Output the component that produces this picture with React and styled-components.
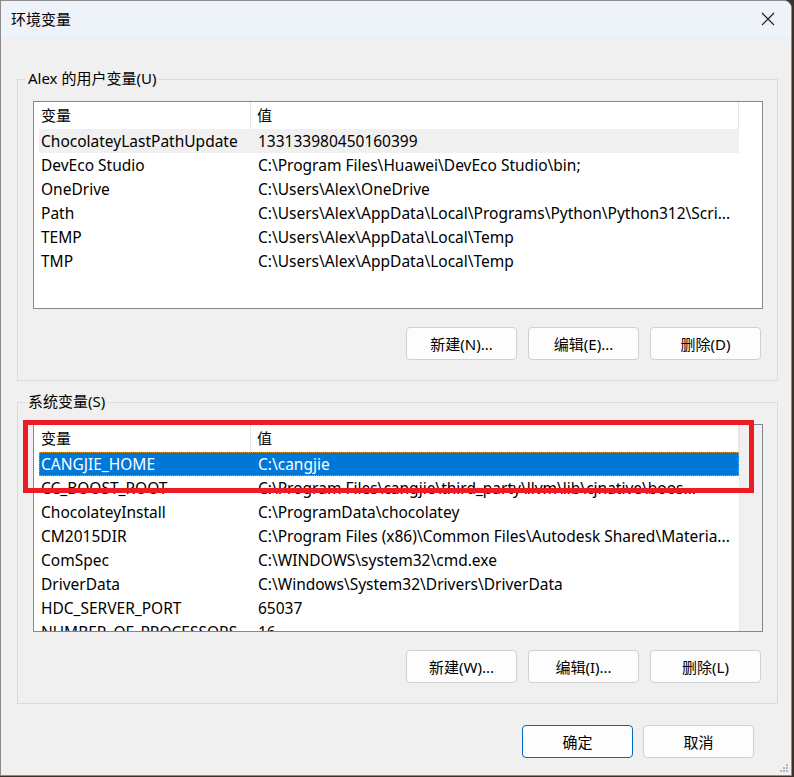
import React from "react";
import styled, { createGlobalStyle } from "styled-components";

const GlobalStyle = createGlobalStyle`
  html, body {
    margin: 0;
    padding: 0;
    background: #3d3129;
  }
  * {
    box-sizing: border-box;
  }
`;

const Window = styled.div`
  position: relative;
  width: 792px;
  height: 776px;
  background: #f0f0f0;
  border: 1px solid #8c8c8c;
  border-top-right-radius: 8px;
  overflow: hidden;
  display: flex;
  flex-direction: column;
  font-family: "Noto Sans", "Noto Sans CJK SC", sans-serif;
  font-size: 15px;
  color: #000;
`;

const TitleBar = styled.div`
  height: 36px;
  flex: none;
  background: #eef2f9;
  display: flex;
  align-items: center;
  justify-content: space-between;
  padding-left: 10px;
`;

const Title = styled.span`
  font-size: 15px;
  line-height: 1;
`;

const CloseButton = styled.button`
  width: 46px;
  height: 36px;
  border: none;
  background: transparent;
  display: flex;
  align-items: center;
  justify-content: center;
  padding: 0;
`;

const Content = styled.div`
  flex: 1;
  display: flex;
  flex-direction: column;
  padding: 42px 14px 0 16px;
`;

const GroupBox = styled.div`
  position: relative;
  width: 761px;
  height: 302px;
  border: 1px solid #dcdcdc;
  padding: 21px 15px 0 15px;
  display: flex;
  flex-direction: column;
  gap: 18px;
  margin-top: ${(p) => (p.$first ? "0" : "21px")};
`;

const Legend = styled.span`
  position: absolute;
  top: -13px;
  left: 8px;
  padding: 0 2px;
  background: #f0f0f0;
  font-size: 15px;
  line-height: 22px;
`;

const ListBox = styled.div`
  width: 730px;
  height: 208px;
  border: 1px solid #828790;
  background: #fff;
  display: flex;
  overflow: hidden;
`;

const Table = styled.div`
  width: 705px;
  flex: none;
  display: flex;
  flex-direction: column;
  overflow: hidden;
`;

const ScrollTrack = styled.div`
  flex: 1;
  background: ${(p) => (p.$visible ? "#f0f0f0" : "#fff")};
  border-left: 1px solid ${(p) => (p.$visible ? "#e8e8e8" : "#fff")};
`;

const Header = styled.div`
  height: 27px;
  flex: none;
  display: grid;
  grid-template-columns: 217px 1fr;
  border-right: 1px solid #e5e5e5;
`;

const HeaderCell = styled.div`
  padding-left: ${(p) => (p.$first ? "7px" : "6px")};
  line-height: 27px;
  border-right: ${(p) => (p.$first ? "1px solid #e5e5e5" : "none")};
`;

const Row = styled.div`
  flex: none;
  height: 24px;
  margin-left: 5px;
  width: 700px;
  display: grid;
  grid-template-columns: 217px 1fr;
  font-size: 15.5px;
  line-height: 24px;
  white-space: nowrap;
  background: ${(p) =>
    p.$selected ? "#0078d7" : p.$soft ? "#f0f0f0" : "transparent"};
  color: ${(p) => (p.$selected ? "#fff" : "#000")};
  outline: ${(p) => (p.$selected ? "1px dotted #e39a2d" : "none")};
  outline-offset: -1px;
`;

const Cell = styled.div`
  padding-left: 2px;
  overflow: hidden;
`;

const ButtonRow = styled.div`
  display: flex;
  justify-content: flex-end;
  gap: 11px;
  padding-right: 1px;
`;

const Button = styled.button`
  width: 111px;
  height: 33px;
  border-radius: 4px;
  border: 1px solid ${(p) => (p.$primary ? "#0067c0" : "#d0d0d0")};
  background: #fdfdfd;
  font-family: "Noto Sans", "Noto Sans CJK SC", sans-serif;
  font-size: 15px;
  color: #000;
  padding: 0;
`;

const Footer = styled.div`
  display: flex;
  justify-content: flex-end;
  gap: 10px;
  margin-top: 21px;
  padding-right: 23px;
`;

const Highlight = styled.div`
  position: absolute;
  left: 22px;
  top: 419px;
  width: 731px;
  height: 73px;
  border: 5px solid #ed1c24;
  pointer-events: none;
`;

const Grip = styled.svg`
  position: absolute;
  right: 3px;
  bottom: 3px;
`;

const userVars = [
  ["ChocolateyLastPathUpdate", "133133980450160399"],
  ["DevEco Studio", "C:\\Program Files\\Huawei\\DevEco Studio\\bin;"],
  ["OneDrive", "C:\\Users\\Alex\\OneDrive"],
  ["Path", "C:\\Users\\Alex\\AppData\\Local\\Programs\\Python\\Python312\\Scri..."],
  ["TEMP", "C:\\Users\\Alex\\AppData\\Local\\Temp"],
  ["TMP", "C:\\Users\\Alex\\AppData\\Local\\Temp"],
];

const sysVars = [
  ["CANGJIE_HOME", "C:\\cangjie"],
  ["CC_BOOST_ROOT", "C:\\Program Files\\cangjie\\third_party\\llvm\\lib\\cjnative\\boos..."],
  ["ChocolateyInstall", "C:\\ProgramData\\chocolatey"],
  ["CM2015DIR", "C:\\Program Files (x86)\\Common Files\\Autodesk Shared\\Materia..."],
  ["ComSpec", "C:\\WINDOWS\\system32\\cmd.exe"],
  ["DriverData", "C:\\Windows\\System32\\Drivers\\DriverData"],
  ["HDC_SERVER_PORT", "65037"],
  ["NUMBER_OF_PROCESSORS", "16"],
];

const VarList = ({ rows, selected, soft, scroll }) => (
  <ListBox>
    <Table>
      <Header>
        <HeaderCell $first>变量</HeaderCell>
        <HeaderCell>值</HeaderCell>
      </Header>
      {rows.map(([name, value], i) => (
        <Row key={name} $selected={i === selected} $soft={i === soft}>
          <Cell>{name}</Cell>
          <Cell>{value}</Cell>
        </Row>
      ))}
    </Table>
    <ScrollTrack $visible={scroll} />
  </ListBox>
);

const App = () => {
  return (
    <>
      <GlobalStyle />
      <Window>
        <TitleBar>
          <Title>环境变量</Title>
          <CloseButton aria-label="关闭">
            <svg width="14" height="14" viewBox="0 0 14 14">
              <path d="M1 1 L13 13 M13 1 L1 13" stroke="#1a1a1a" strokeWidth="1.1" />
            </svg>
          </CloseButton>
        </TitleBar>
        <Content>
          <GroupBox $first>
            <Legend>Alex 的用户变量(U)</Legend>
            <VarList rows={userVars} soft={0} />
            <ButtonRow>
              <Button>新建(N)...</Button>
              <Button>编辑(E)...</Button>
              <Button>删除(D)</Button>
            </ButtonRow>
          </GroupBox>
          <GroupBox>
            <Legend>系统变量(S)</Legend>
            <VarList rows={sysVars} selected={0} scroll />
            <ButtonRow>
              <Button>新建(W)...</Button>
              <Button>编辑(I)...</Button>
              <Button>删除(L)</Button>
            </ButtonRow>
          </GroupBox>
          <Footer>
            <Button $primary>确定</Button>
            <Button>取消</Button>
          </Footer>
        </Content>
        <Highlight />
        <Grip width="8" height="8" viewBox="0 0 8 8">
          <rect x="6" y="0" width="2" height="2" fill="#b4b4b4" />
          <rect x="3" y="3" width="2" height="2" fill="#b4b4b4" />
          <rect x="6" y="3" width="2" height="2" fill="#b4b4b4" />
          <rect x="0" y="6" width="2" height="2" fill="#b4b4b4" />
          <rect x="3" y="6" width="2" height="2" fill="#b4b4b4" />
          <rect x="6" y="6" width="2" height="2" fill="#b4b4b4" />
        </Grip>
      </Window>
    </>
  );
};

export default App;
